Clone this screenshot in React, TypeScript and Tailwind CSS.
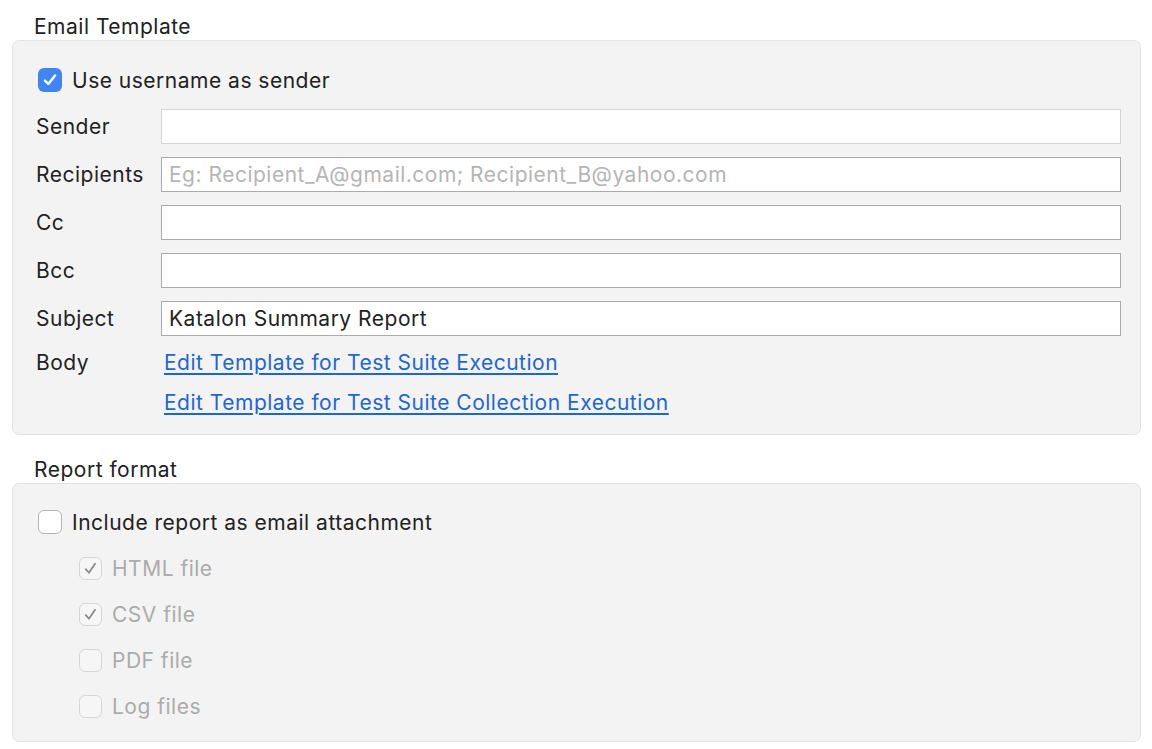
import React from "react"

const font = { fontFamily: "Inter, 'Noto Sans', sans-serif" }

function Check({ checked, disabled, size }: { checked?: boolean; disabled?: boolean; size: "lg" | "sm" }) {
  const box = size === "lg" ? "w-[24px] h-[24px] rounded-[6px]" : "w-[23px] h-[23px] rounded-[6px]"
  if (checked && !disabled) {
    return (
      <span className={`${box} bg-[#3f86f4] flex items-center justify-center shrink-0`}>
        <svg width="18" height="18" viewBox="0 0 16 16" fill="none">
          <path d="M3.5 8.5 L6.5 11.5 L12.5 4" stroke="white" strokeWidth="2.2" strokeLinecap="round" strokeLinejoin="round" />
        </svg>
      </span>
    )
  }
  return (
    <span
      className={`${box} border ${disabled ? "border-[#d6d6d6] bg-[#f6f6f6]" : "border-[#b4b4b4] bg-white"} flex items-center justify-center shrink-0`}
    >
      {checked && (
        <svg width="19" height="19" viewBox="0 0 16 16" fill="none">
          <path d="M4 8.6 L6.7 11.6 L11.8 4" stroke="#8a8a8a" strokeWidth="1.5" strokeLinecap="round" strokeLinejoin="round" />
        </svg>
      )}
    </span>
  )
}

function Field({ label, value, placeholder, light }: { label: string; value?: string; placeholder?: string; light?: boolean }) {
  return (
    <div className="flex items-center h-[35px]">
      <div className="w-[125px] shrink-0 text-[#222] pt-[1px]">{label}</div>
      <div
        className={`flex-1 h-[35px] bg-white border ${light ? "border-[#d4d4d4]" : "border-[#ababab]"} flex items-center px-[7px] pt-[1px]`}
      >
        {value ? (
          <span className="text-[#222]">{value}</span>
        ) : placeholder ? (
          <span className="text-[#b5b5b5]">{placeholder}</span>
        ) : null}
      </div>
    </div>
  )
}

export default function App() {
  return (
    <div
      className="w-[1152px] h-[749px] bg-white overflow-hidden px-[12px] pt-[12px] text-[21px] tracking-[0.5px]"
      style={font}
    >
      {/* EMAIL TEMPLATE */}
      <div className="h-[28px] leading-[28px] pl-[22px] text-[#222] pt-[1px]">Email Template</div>
      <div className="bg-[#f3f3f3] border border-[#e3e3e3] rounded-[7px] w-[1129px] pl-[23px] pr-[19px] pt-[27px] pb-[12px]">
        <div className="flex items-center gap-[10px] h-[24px] pl-[2px]">
          <Check checked size="lg" />
          <span className="text-[#222] pt-[1px]">Use username as sender</span>
        </div>

        <div className="flex flex-col gap-[13px] mt-[17px]">
          <Field label="Sender" light />
          <Field label="Recipients" placeholder="Eg: Recipient_A@gmail.com; Recipient_B@yahoo.com" />
          <Field label="Cc" />
          <Field label="Bcc" />
          <Field label="Subject" value="Katalon Summary Report" />
        </div>

        <div className="flex mt-[7px] mb-[-1px]">
          <div className="w-[128px] shrink-0 leading-[40px] text-[#222]">Body</div>
          <div className="flex flex-col items-start">
            <a href="#" className="leading-[40px] text-[#1c66d6] underline underline-offset-[3px]">
              Edit Template for Test Suite Execution
            </a>
            <a href="#" className="leading-[40px] text-[#1c66d6] underline underline-offset-[3px]">
              Edit Template for Test Suite Collection Execution
            </a>
          </div>
        </div>
      </div>

      {/* REPORT FORMAT */}
      <div className="h-[28px] leading-[28px] pl-[22px] mt-[20px] text-[#222] pt-[1px]">Report format</div>
      <div className="bg-[#f3f3f3] border border-[#e3e3e3] rounded-[7px] w-[1129px] pl-[23px] pt-[15px] pb-[12px]">
        <div className="flex items-center gap-[10px] h-[46px] pl-[2px]">
          <Check size="lg" />
          <span className="text-[#222] pt-[1px]">Include report as email attachment</span>
        </div>
        {[
          { label: "HTML file", checked: true },
          { label: "CSV file", checked: true },
          { label: "PDF file", checked: false },
          { label: "Log files", checked: false },
        ].map((it) => (
          <div key={it.label} className="flex items-center gap-[10px] h-[46px] pl-[43px]">
            <Check size="sm" checked={it.checked} disabled />
            <span className="text-[#ababab] pt-[1px]">{it.label}</span>
          </div>
        ))}
      </div>
    </div>
  )
}
